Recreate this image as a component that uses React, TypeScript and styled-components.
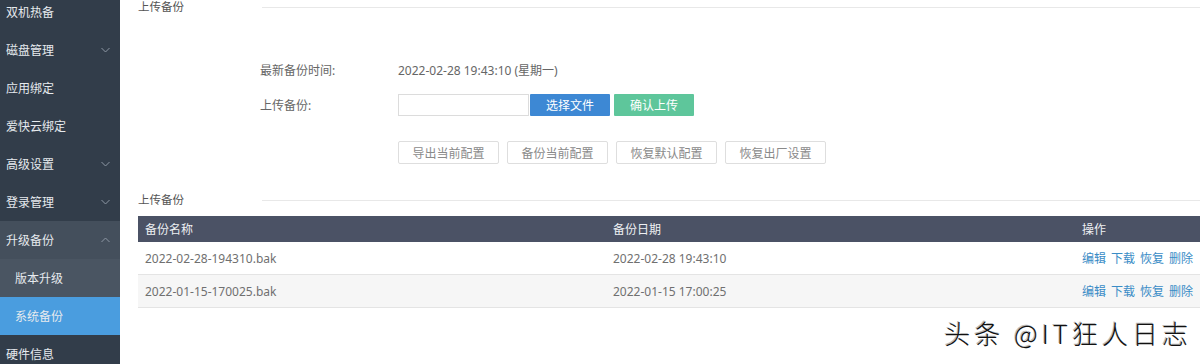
import React from "react";
import styled, { createGlobalStyle } from "styled-components";

const GlobalStyle = createGlobalStyle`
  html, body { margin: 0; padding: 0; background: #fff; }
  body {
    width: 1200px; height: 364px; overflow: hidden;
    font-family: "Noto Sans", "Noto Sans CJK SC", sans-serif;
    font-size: 12px;
  }
  * { box-sizing: border-box; }
`;

const Page = styled.div`
  position: relative;
  display: flex;
  width: 1200px;
  height: 364px;
  overflow: hidden;
`;

const Sidebar = styled.nav`
  width: 120px;
  flex: none;
  height: 364px;
  overflow: hidden;
  background: #323d4a;
`;

const MenuList = styled.div`
  display: flex;
  flex-direction: column;
  margin-top: -7px;
`;

const MenuItem = styled.div<{ $variant?: "open" | "sub" | "active" }>`
  height: 38px;
  flex: none;
  display: flex;
  align-items: center;
  justify-content: space-between;
  padding: 0 10px 0 ${(p) => (p.$variant === "sub" || p.$variant === "active" ? "15px" : "6px")};
  color: #e6eaee;
  font-size: 12px;
  background: ${(p) =>
    p.$variant === "active"
      ? "#4a9ddf"
      : p.$variant === "sub"
      ? "#4a5562"
      : p.$variant === "open"
      ? "#444f5c"
      : "transparent"};
`;

const Chevron = ({ up }: { up?: boolean }) => (
  <svg width="9" height="6" viewBox="0 0 9 6">
    <polyline
      points={up ? "0.5,5 4.5,1 8.5,5" : "0.5,1 4.5,5 8.5,1"}
      fill="none"
      stroke="#8c97a3"
      strokeWidth="1"
    />
  </svg>
);

const Main = styled.main`
  flex: 1;
  padding-left: 18px;
  display: flex;
  flex-direction: column;
  color: #666;
`;

const SectionHead = styled.div<{ $top: number }>`
  display: flex;
  align-items: center;
  height: 14px;
  margin-top: ${(p) => p.$top}px;
`;

const SectionTitle = styled.div`
  width: 124px;
  color: #555;
  font-size: 11.5px;
  line-height: 14px;
`;

const SectionLine = styled.div`
  flex: 1;
  height: 1px;
  background: #e8e8e8;
`;

const Form = styled.div`
  display: flex;
  flex-direction: column;
  padding-left: 122px;
  margin-top: 45px;
`;

const FormRow = styled.div<{ $gap: number }>`
  display: flex;
  align-items: center;
  height: 22px;
  margin-top: ${(p) => p.$gap}px;
`;

const Label = styled.div`
  width: 138px;
  color: #666;
`;

const Value = styled.div`
  color: #666;
`;

const FileInput = styled.div`
  width: 131px;
  height: 22px;
  border: 1px solid #dcdcdc;
  background: #fff;
`;

const ActionButton = styled.button<{ $color: string; $ml: number }>`
  height: 22px;
  width: 80px;
  margin-left: ${(p) => p.$ml}px;
  border: none;
  border-radius: 1px;
  background: ${(p) => p.$color};
  color: #fff;
  font-family: inherit;
  font-size: 12px;
  padding: 0;
`;

const ButtonRow = styled.div`
  display: flex;
  gap: 8px;
  margin-left: 260px;
  margin-top: 25px;
`;

const OutlineButton = styled.button`
  width: 101px;
  height: 23px;
  border: 1px solid #dedede;
  border-radius: 2px;
  background: #fff;
  color: #8a8a8a;
  font-family: inherit;
  font-size: 12px;
  padding: 0;
`;

const Table = styled.div`
  margin-top: 9px;
  width: 1062px;
  display: flex;
  flex-direction: column;
`;

const Row = styled.div<{ $kind: "head" | "odd" | "even" }>`
  display: grid;
  grid-template-columns: 468px 469px 1fr;
  align-items: center;
  height: ${(p) => (p.$kind === "head" ? "26px" : "33px")};
  background: ${(p) =>
    p.$kind === "head" ? "#4b5265" : p.$kind === "even" ? "#f6f6f6" : "#fff"};
  color: ${(p) => (p.$kind === "head" ? "#eef0f3" : "#707070")};
  border-bottom: ${(p) => (p.$kind === "head" ? "none" : "1px solid #e4e4e4")};
`;

const Cell = styled.div`
  padding-left: 7px;
  white-space: nowrap;
`;

const Links = styled.div`
  display: flex;
  gap: 5px;
  padding-left: 7px;
`;

const Link = styled.span`
  color: #3a8cc6;
`;

const Watermark = styled.div`
  position: absolute;
  right: 8px;
  top: 316px;
  font-family: "Noto Sans CJK SC", sans-serif;
  font-size: 26px;
  font-weight: 300;
  letter-spacing: 4px;
  line-height: 34px;
  color: #111;
  text-shadow: 1px 1px 0 #fff, -1px -1px 0 #bbb;
`;

const menu: { label: string; variant?: "open" | "sub" | "active"; chevron?: "down" | "up" }[] = [
  { label: "双机热备" },
  { label: "磁盘管理", chevron: "down" },
  { label: "应用绑定" },
  { label: "爱快云绑定" },
  { label: "高级设置", chevron: "down" },
  { label: "登录管理", chevron: "down" },
  { label: "升级备份", variant: "open", chevron: "up" },
  { label: "版本升级", variant: "sub" },
  { label: "系统备份", variant: "active" },
  { label: "硬件信息" },
];

const rows = [
  { name: "2022-02-28-194310.bak", date: "2022-02-28 19:43:10" },
  { name: "2022-01-15-170025.bak", date: "2022-01-15 17:00:25" },
];

export default function App() {
  return (
    <>
      <GlobalStyle />
      <Page>
        <Sidebar>
          <MenuList>
            {menu.map((m) => (
              <MenuItem key={m.label} $variant={m.variant}>
                <span>{m.label}</span>
                {m.chevron && <Chevron up={m.chevron === "up"} />}
              </MenuItem>
            ))}
          </MenuList>
        </Sidebar>
        <Main>
          <SectionHead $top={0}>
            <SectionTitle>上传备份</SectionTitle>
            <SectionLine />
          </SectionHead>
          <Form>
            <FormRow $gap={0}>
              <Label>最新备份时间:</Label>
              <Value>2022-02-28 19:43:10 (星期一)</Value>
            </FormRow>
            <FormRow $gap={13}>
              <Label>上传备份:</Label>
              <FileInput />
              <ActionButton $color="#3d88d4" $ml={1}>选择文件</ActionButton>
              <ActionButton $color="#5ec69b" $ml={4}>确认上传</ActionButton>
            </FormRow>
          </Form>
          <ButtonRow>
            <OutlineButton>导出当前配置</OutlineButton>
            <OutlineButton>备份当前配置</OutlineButton>
            <OutlineButton>恢复默认配置</OutlineButton>
            <OutlineButton>恢复出厂设置</OutlineButton>
          </ButtonRow>
          <SectionHead $top={29}>
            <SectionTitle>上传备份</SectionTitle>
            <SectionLine />
          </SectionHead>
          <Table>
            <Row $kind="head">
              <Cell>备份名称</Cell>
              <Cell>备份日期</Cell>
              <Cell>操作</Cell>
            </Row>
            {rows.map((r, i) => (
              <Row key={r.name} $kind={i % 2 === 0 ? "odd" : "even"}>
                <Cell>{r.name}</Cell>
                <Cell>{r.date}</Cell>
                <Links>
                  <Link>编辑</Link>
                  <Link>下载</Link>
                  <Link>恢复</Link>
                  <Link>删除</Link>
                </Links>
              </Row>
            ))}
          </Table>
        </Main>
        <Watermark>头条 @IT狂人日志</Watermark>
      </Page>
    </>
  );
}
